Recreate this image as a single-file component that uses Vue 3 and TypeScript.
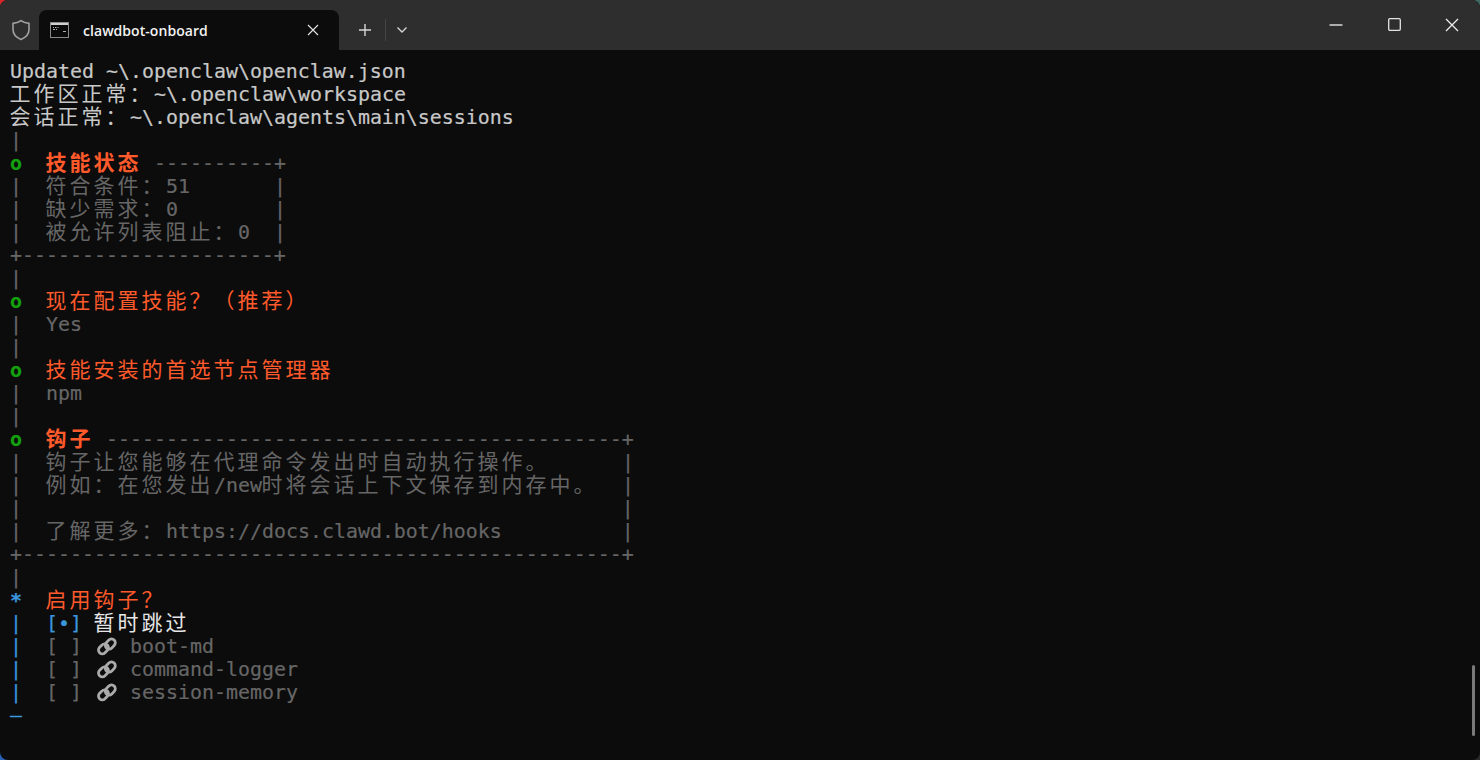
<script setup lang="ts">
type Seg = { t: string; c?: string };
type Line = Seg[];
const dash = (n: number) => '-'.repeat(n);
const sp = (n: number) => ' '.repeat(n);
const g = (t: string): Seg => ({ t, c: 'gray' });
const bar = g('|');
const lines: Line[] = [
  [{ t: 'Updated ~\\.openclaw\\openclaw.json' }],
  [{ t: '工作区正常：~\\.openclaw\\workspace' }],
  [{ t: '会话正常：~\\.openclaw\\agents\\main\\sessions' }],
  [bar],
  [{ t: 'o', c: 'green' }, { t: '  ' }, { t: '技能状态', c: 'orange bold' }, g(' ' + dash(10) + '+')],
  [g('|  符合条件：51' + sp(7) + '|')],
  [g('|  缺少需求：0' + sp(8) + '|')],
  [g('|  被允许列表阻止：0  |')],
  [g('+' + dash(21) + '+')],
  [bar],
  [{ t: 'o', c: 'green' }, { t: '  ' }, { t: '现在配置技能？（推荐）', c: 'orange' }],
  [g('|  Yes')],
  [bar],
  [{ t: 'o', c: 'green' }, { t: '  ' }, { t: '技能安装的首选节点管理器', c: 'orange' }],
  [g('|  npm')],
  [bar],
  [{ t: 'o', c: 'green' }, { t: '  ' }, { t: '钩子', c: 'orange bold' }, g(' ' + dash(43) + '+')],
  [g('|  钩子让您能够在代理命令发出时自动执行操作。' + sp(6) + '|')],
  [g('|  例如：在您发出/new时将会话上下文保存到内存中。  |')],
  [g('|' + sp(50) + '|')],
  [g('|  了解更多：https://docs.clawd.bot/hooks' + sp(10) + '|')],
  [g('+' + dash(50) + '+')],
  [bar],
  [{ t: '*', c: 'blue star' }, { t: '  ' }, { t: '启用钩子？', c: 'orange' }],
  [{ t: '|  [•] ', c: 'blue' }, { t: '暂时跳过', c: 'white' }],
  [{ t: '|  ', c: 'blue' }, g('[ ] '), { t: 'LINK' }, g(' boot-md')],
  [{ t: '|  ', c: 'blue' }, g('[ ] '), { t: 'LINK' }, g(' command-logger')],
  [{ t: '|  ', c: 'blue' }, g('[ ] '), { t: 'LINK' }, g(' session-memory')],
  [{ t: '—', c: 'blue' }],
];
const split = (s: string) =>
  s.match(/[\u3000-\u9fff\uff00-\uffef]+|[^\u3000-\u9fff\uff00-\uffef]+/g) ?? [];
const isCjk = (s: string) => /^[\u3000-\u9fff\uff00-\uffef]/.test(s);
</script>

<template>
  <div class="win">
    <header class="titlebar">
      <svg class="shield" width="20" height="22" viewBox="0 0 20 22" fill="none">
        <path d="M10 1.6 C7.6 3.4 5 4.2 2 4.4 V10.5 C2 15.2 5 18.4 10 20.4 C15 18.4 18 15.2 18 10.5 V4.4 C15 4.2 12.4 3.4 10 1.6 Z" stroke="#a0a0a0" stroke-width="1.6" />
      </svg>
      <div class="tab">
        <svg class="termicon" width="19" height="16" viewBox="0 0 19 16">
          <rect x="0.5" y="0.5" width="18" height="15" fill="#0a0a0a" stroke="#8a8a8a" />
          <rect x="1" y="1" width="17" height="2" fill="#d0d0d0" />
          <path d="M3 5.5h1M5 5.5h1.5M7.5 5.5h1M3 7.5h2M6 7.5h1M13 9.5h3" stroke="#b0b0b0" stroke-width="1" />
        </svg>
        <span class="tabtitle">clawdbot-onboard</span>
        <svg class="close" width="12" height="12" viewBox="0 0 12 12">
          <path d="M1 1 11 11M11 1 1 11" stroke="#e6e6e6" stroke-width="1.1" />
        </svg>
      </div>
      <div class="tabactions">
        <svg width="14" height="14" viewBox="0 0 14 14">
          <path d="M7 1v12M1 7h12" stroke="#d8d8d8" stroke-width="1.4" />
        </svg>
        <span class="sep"></span>
        <svg width="12" height="8" viewBox="0 0 12 8" fill="none">
          <path d="M1.5 1.5 6 6l4.5-4.5" stroke="#d8d8d8" stroke-width="1.3" />
        </svg>
      </div>
      <div class="spacer"></div>
      <div class="controls">
        <span class="ctl"><svg width="14" height="4" viewBox="0 0 14 4"><path d="M0.5 2h13" stroke="#d8d8d8" stroke-width="1.4" /></svg></span>
        <span class="ctl"><svg width="13" height="13" viewBox="0 0 13 13" fill="none"><rect x="0.7" y="0.7" width="11.6" height="11.6" rx="1.2" stroke="#e4e4e4" stroke-width="1.3" /></svg></span>
        <span class="ctl"><svg width="14" height="14" viewBox="0 0 14 14"><path d="M1 1 13 13M13 1 1 13" stroke="#ececec" stroke-width="1.3" /></svg></span>
      </div>
    </header>
    <main class="term">
      <div v-for="(line, i) in lines" :key="i" class="line">
        <template v-for="(seg, j) in line" :key="j">
          <svg v-if="seg.t === 'LINK'" class="link" width="24" height="23" viewBox="0 0 24 23" fill="none">
            <g stroke="#ababab" stroke-width="2.8">
              <rect x="4" y="10" width="11" height="7.6" rx="3.8" transform="rotate(-45 9.5 13.8)" />
              <rect x="10.8" y="5.2" width="11" height="7.6" rx="3.8" transform="rotate(-45 16.3 9)" />
            </g>
          </svg>
          <span v-else :class="seg.c"><span v-for="(r, k) in split(seg.t)" :key="k" :class="{ cjk: isCjk(r) }">{{ r }}</span></span>
        </template>
      </div>
      <div class="thumb"></div>
    </main>
  </div>
</template>

<style>
html, body {
  margin: 0;
  overflow: hidden;
  background:
    radial-gradient(circle at 0 0, #d8262a 0 9px, transparent 10px),
    radial-gradient(circle at 0 100%, #2a62b8 0 9px, transparent 10px),
    radial-gradient(circle at 100% 0, #3d6a62 0 9px, transparent 10px),
    #2a2a2a;
  height: 760px;
}
</style>

<style scoped>
.win { width: 1480px; height: 760px; display: flex; flex-direction: column; overflow: hidden; background: #0c0c0c; border-radius: 8px; }
.titlebar { height: 50px; flex: none; display: flex; align-items: flex-end; background: #2e2e2e; font-family: "Open Sans", "Noto Sans", sans-serif; }
.shield { margin: 0 8px 9px 11px; }
.tab { width: 300px; height: 40px; box-sizing: border-box; display: flex; align-items: center; padding: 0 20px 0 11px; background: #0c0c0c; border-radius: 8px 8px 0 0; }
.termicon { margin-right: 14px; flex: none; }
.tabtitle { flex: 1; color: #f2f2f2; font: 600 14px "Open Sans", "Noto Sans", sans-serif; letter-spacing: 0.05px; }
.tabactions { display: flex; align-items: center; height: 40px; padding-left: 19px; }
.sep { width: 1px; height: 22px; background: #454545; margin: 0 10px 0 13px; }
.spacer { flex: 1; }
.controls { display: flex; align-self: flex-start; height: 49px; margin-right: -1px; }
.ctl { width: 58px; height: 49px; display: flex; align-items: center; justify-content: center; }
.term { position: relative; flex: 1; box-sizing: border-box; padding: 10px 0 0 10px; color: #c8c8c8; font-family: "DejaVu Sans Mono", "Noto Sans CJK SC", monospace; font-size: 19.93px; line-height: 23px; -webkit-text-stroke: 0.2px; }
.line { height: 23px; white-space: pre; display: flex; }
.cjk { font-family: "Noto Sans CJK SC", sans-serif; font-size: 21px; letter-spacing: 3px; line-height: 0; -webkit-text-stroke: 0; margin-left: -0.5px; margin-right: 0.5px; }
.gray { color: #666666; }
.green { color: #13a10e; font-weight: 700; }
.blue { color: #3a96dd; }
.star { font-weight: 700; }
.orange { color: #ff5a2b; }
.bold { font-weight: 700; }
.white { color: #e6e6e6; }
.link { flex: none; }
.thumb { position: absolute; right: 5px; top: 615px; width: 3px; height: 71px; background: #7a7a7a; border-radius: 2px; }
</style>
